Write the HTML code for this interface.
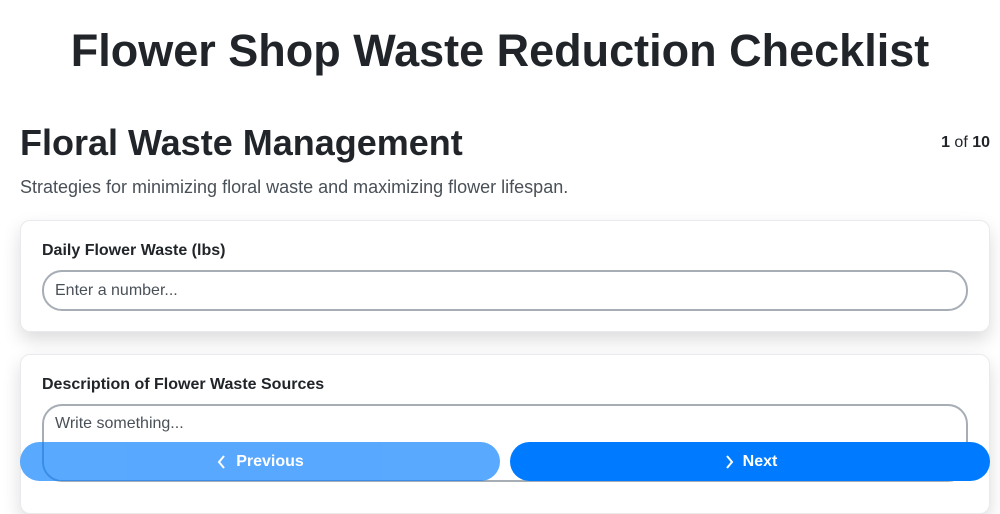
<!DOCTYPE html>
<html><head><style>
*{box-sizing:border-box;margin:0;padding:0}
body{width:1000px;height:500px;overflow:hidden;background:#fff;font-family:"Liberation Sans",Arial,sans-serif;color:#212529;position:relative}
h1{position:absolute;top:25px;left:0;width:1000px;text-align:center;font-size:45px;font-weight:bold;color:#212529}
h2{position:absolute;top:122px;left:20px;font-size:36px;font-weight:bold}
.cnt{position:absolute;top:134px;right:10px;font-size:16px}
.sub{position:absolute;top:177px;left:20px;font-size:18px;color:#495057}
.card{position:absolute;left:20px;width:970px;background:#fff;border:1px solid #e8eaed;border-radius:10px;box-shadow:0 8px 18px rgba(0,0,0,.14)}
.lbl{position:absolute;left:21px;font-size:16px;font-weight:bold}
.inp{position:absolute;left:21px;width:926px;border:2px solid #a7adb5;border-radius:20px;font-size:16px;color:#495057;padding-left:11px}
.btn{position:absolute;top:442px;height:39px;width:480px;border-radius:20px;background:#007bff;color:#fff;font-size:16px;font-weight:bold;display:flex;align-items:center;justify-content:center;gap:8px}
</style></head><body>
<h1>Flower Shop Waste Reduction Checklist</h1>
<h2>Floral Waste Management</h2>
<div class="cnt"><b>1</b> of <b>10</b></div>
<div class="sub">Strategies for minimizing floral waste and maximizing flower lifespan.</div>
<div class="card" style="top:220px;height:112px">
<div class="lbl" style="top:21px">Daily Flower Waste (lbs)</div>
<div class="inp" style="top:49px;height:41px;line-height:37px">Enter a number...</div>
</div>
<div class="card" style="top:354px;height:160px">
<div class="lbl" style="top:21px">Description of Flower Waste Sources</div>
<div class="inp" style="top:49px;height:78px;padding-top:9px">Write something...</div>
</div>
<div class="btn" style="left:20px;opacity:.65"><svg width="12" height="16" viewBox="0 0 12 16"><path d="M8 2 L3 8 L8 14" stroke="#fff" stroke-width="2" fill="none"/></svg>Previous</div>
<div class="btn" style="left:510px"><svg width="12" height="16" viewBox="0 0 12 16"><path d="M4 2 L9 8 L4 14" stroke="#fff" stroke-width="2" fill="none"/></svg>Next</div>
</body></html>
